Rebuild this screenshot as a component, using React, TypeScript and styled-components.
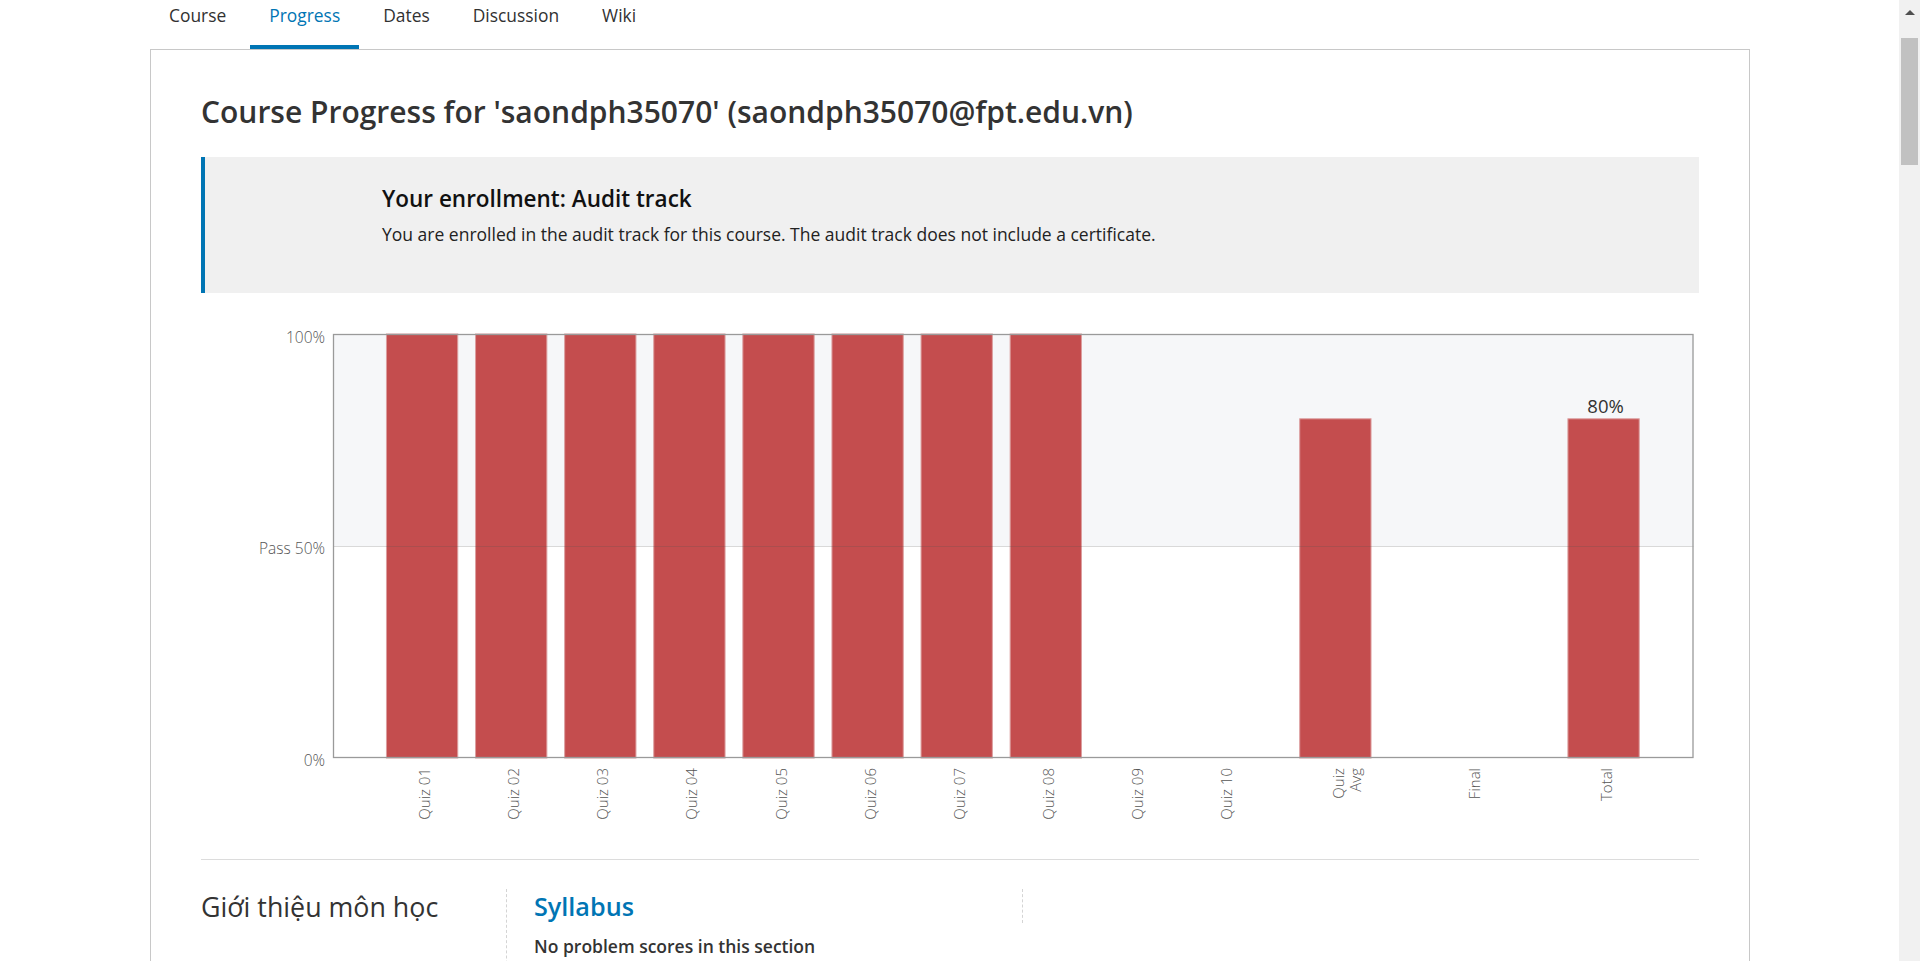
import React from "react";
import styled, { createGlobalStyle } from "styled-components";

const GlobalStyle = createGlobalStyle`
  html, body {
    margin: 0;
    padding: 0;
    background: #ffffff;
    overflow: hidden;
  }
  body {
    font-family: "Open Sans", "Noto Sans", Arial, sans-serif;
    color: #333333;
  }
  * { box-sizing: border-box; }
`;

const Page = styled.div`
  display: flex;
  width: 1920px;
  height: 961px;
  overflow: hidden;
`;

const Main = styled.div`
  flex: 1;
  display: flex;
  flex-direction: column;
  min-width: 0;
`;

const TopRule = styled.div`
  height: 1px;
  margin-top: 1px;
  background: #d2d2d2;
`;

const Container = styled.div`
  width: 1600px;
  margin-left: 150px;
  display: flex;
  flex-direction: column;
  flex: 1;
`;

const TabsNav = styled.nav`
  display: flex;
  height: 48px;
`;

const Tab = styled.a<{ $active?: boolean }>`
  display: block;
  height: 48px;
  padding: 2px 19px 0;
  margin-right: 5px;
  font-size: 17.4px;
  line-height: 24px;
  color: ${(p) => (p.$active ? "#0075b4" : "#313131")};
  border-bottom: 4px solid ${(p) => (p.$active ? "#0075b4" : "transparent")};
  text-decoration: none;
  cursor: pointer;
`;

const Card = styled.section`
  flex: 1;
  border: 1px solid #c8c8c8;
  border-bottom: none;
  padding: 0 50px;
  background: #fff;
`;

const Title = styled.h1`
  margin: 0;
  padding-top: 44px;
  font-size: 30px;
  line-height: 36px;
  font-weight: 600;
  color: #333;
`;

const Alert = styled.div`
  margin-top: 27px;
  height: 136px;
  background: #f0f0f0;
  border-left: 4px solid #0075b4;
  padding: 28px 0 0 177px;
`;

const AlertTitle = styled.h3`
  margin: 0;
  font-size: 22.5px;
  line-height: 28px;
  font-weight: 600;
  color: #111;
`;

const AlertBody = styled.p`
  margin: 7px 0 0;
  font-size: 17.5px;
  line-height: 28px;
  color: #222;
`;

const ChartSvg = styled.svg`
  display: block;
  margin-top: 17px;
`;

const AxisText = styled.text`
  font-family: "Open Sans", "Noto Sans", Arial, sans-serif;
  font-size: 15.5px;
  font-weight: 300;
  fill: #555;
`;

const TickText = styled.text`
  font-family: "Open Sans", "Noto Sans", Arial, sans-serif;
  font-size: 15px;
  font-weight: 300;
  fill: #555;
`;

const ValueText = styled.text`
  font-family: "Open Sans", "Noto Sans", Arial, sans-serif;
  font-size: 18.5px;
  fill: #333;
`;

const Divider = styled.hr`
  margin: 19px 0 0;
  border: none;
  height: 1px;
  background: #dcdcdc;
`;

const ChapterRow = styled.div`
  display: flex;
  margin-top: 29px;
`;

const ChapterName = styled.h2`
  margin: 0;
  width: 305px;
  flex: none;
  font-size: 26.8px;
  line-height: 36px;
  font-weight: 400;
  color: #333;
`;

const SectionBlock = styled.div`
  width: 516px;
  flex: none;
  border-left: 1px dashed #d4d4d4;
  padding-left: 27px;
  min-height: 90px;
`;

const SectionTitle = styled.a`
  display: block;
  font-size: 25.2px;
  line-height: 34px;
  font-weight: 600;
  color: #0075b4;
  text-decoration: none;
`;

const SectionNote = styled.p`
  margin: 10px 0 0;
  font-size: 17.5px;
  line-height: 26px;
  font-weight: 600;
  color: #333;
`;

const ScoreBlock = styled.div`
  height: 34px;
  border-left: 1px dashed #d4d4d4;
  flex: none;
  width: 10px;
`;

const Scrollbar = styled.div`
  width: 21px;
  flex: none;
  background: #f1f1f1;
  display: flex;
  flex-direction: column;
  align-items: center;
`;

const ScrollArrow = styled.div`
  margin-top: 10px;
  width: 0;
  height: 0;
  border-left: 5px solid transparent;
  border-right: 5px solid transparent;
  border-bottom: 5px solid #505050;
`;

const ScrollThumb = styled.div`
  margin-top: 23px;
  width: 17px;
  height: 127px;
  background: #c1c1c1;
`;

const tabs = ["Course", "Progress", "Dates", "Discussion", "Wiki"];

type Item = { label: string[]; x: number; value: number; showValue?: boolean };

const items: Item[] = [
  ...Array.from({ length: 10 }, (_, i) => ({
    label: [`Quiz ${String(i + 1).padStart(2, "0")}`],
    x: i + 1,
    value: i < 8 ? 1 : 0,
  })),
  { label: ["Quiz", "Avg"], x: 11.25, value: 0.8 },
  { label: ["Final"], x: 12.78, value: 0 },
  { label: ["Total"], x: 14.26, value: 0.8, showValue: true },
];

const P = { left: 132, right: 1492.5, top: 24, bottom: 448 };
const PITCH = 89.1;
const BAR_W = 71.3;
const px = (x: number) => P.left + x * PITCH;
const py = (v: number) => P.bottom - v * (P.bottom - P.top);

function ProgressChart() {
  const passY = py(0.5);
  return (
    <ChartSvg width={1497} height={530} viewBox="0 0 1497 530">
      <rect x={P.left} y={P.top} width={P.right - P.left} height={passY - P.top} fill="#f6f7f9" />
      <rect x={P.left} y={passY} width={P.right - P.left} height={P.bottom - passY} fill="#ffffff" />
      {items.map((it, i) =>
        it.value > 0 ? (
          <rect
            key={`b${i}`}
            x={px(it.x) - BAR_W / 2}
            y={py(it.value)}
            width={BAR_W}
            height={P.bottom - py(it.value)}
            fill="#c44d4e"
            stroke="#dc9e9f"
            strokeWidth={1}
          />
        ) : null
      )}
      <line x1={P.left} x2={P.right} y1={passY + 0.5} y2={passY + 0.5} stroke="rgba(80,80,80,0.22)" strokeWidth={1.2} />
      <rect
        x={P.left + 0.5}
        y={P.top + 0.5}
        width={P.right - P.left - 1}
        height={P.bottom - P.top - 1}
        fill="none"
        stroke="#9a9a9a"
        strokeWidth={1.3}
      />
      <AxisText x={124} y={P.top + 3} textAnchor="end" dominantBaseline="central">100%</AxisText>
      <AxisText x={124} y={passY + 2} textAnchor="end" dominantBaseline="central">Pass 50%</AxisText>
      <AxisText x={124} y={P.bottom + 2} textAnchor="end" dominantBaseline="central">0%</AxisText>
      {items.map((it, i) => {
        const cx = px(it.x) + 2;
        const lines = it.label;
        return lines.map((ln, j) => {
          const lx = lines.length > 1 ? cx + 1 + j * 17 : cx;
          return (
            <TickText
              key={`t${i}-${j}`}
              x={lx}
              y={458}
              textAnchor="end"
              dominantBaseline="central"
              transform={`rotate(-90 ${lx} 458)`}
            >
              {ln}
            </TickText>
          );
        });
      })}
      {items
        .filter((it) => it.showValue)
        .map((it, i) => (
          <ValueText key={`v${i}`} x={px(it.x) + 2} y={py(it.value) - 13} textAnchor="middle" dominantBaseline="central">
            {Math.round(it.value * 100)}%
          </ValueText>
        ))}
    </ChartSvg>
  );
}

export default function App() {
  return (
    <>
      <GlobalStyle />
      <Page>
        <Main>
          <TopRule />
          <Container>
            <TabsNav>
              {tabs.map((t) => (
                <Tab key={t} $active={t === "Progress"}>
                  {t}
                </Tab>
              ))}
            </TabsNav>
            <Card>
              <Title>Course Progress for 'saondph35070' (saondph35070@fpt.edu.vn)</Title>
              <Alert>
                <AlertTitle>Your enrollment: Audit track</AlertTitle>
                <AlertBody>
                  You are enrolled in the audit track for this course. The audit track does not include a certificate.
                </AlertBody>
              </Alert>
              <ProgressChart />
              <Divider />
              <ChapterRow>
                <ChapterName>Giới thiệu môn học</ChapterName>
                <SectionBlock>
                  <SectionTitle>Syllabus</SectionTitle>
                  <SectionNote>No problem scores in this section</SectionNote>
                </SectionBlock>
                <ScoreBlock />
              </ChapterRow>
            </Card>
          </Container>
        </Main>
        <Scrollbar>
          <ScrollArrow />
          <ScrollThumb />
        </Scrollbar>
      </Page>
    </>
  );
}
